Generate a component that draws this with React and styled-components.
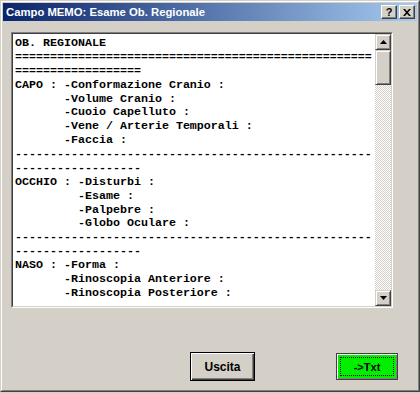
import React from "react";
import styled, { createGlobalStyle } from "styled-components";

const Global = createGlobalStyle`
  html, body { margin: 0; padding: 0; background: #d4d0c8; }
  body { width: 420px; height: 393px; overflow: hidden; }
  * { box-sizing: border-box; }
`;

const Window = styled.div`
  width: 420px;
  height: 392px;
  background: #d4d0c8;
  border: 1px solid;
  border-color: #d4d0c8 #404040 #404040 #d4d0c8;
  display: flex;
  flex-direction: column;
`;

const Frame = styled.div`
  flex: 1;
  display: flex;
  flex-direction: column;
  border: 1px solid;
  border-color: #ffffff #808080 #808080 #ffffff;
  padding: 1px;
`;

const TitleBar = styled.div`
  height: 18px;
  display: flex;
  align-items: center;
  padding: 0 2px 0 2px;
  background: linear-gradient(to right, #0a246a, #a6caf0);
`;

const Title = styled.div`
  flex: 1;
  color: #ffffff;
  font-family: "Liberation Sans", Arial, sans-serif;
  font-weight: bold;
  font-size: 11.3px;
  padding-left: 1px;
  white-space: nowrap;
`;

const CaptionButton = styled.div`
  width: 16px;
  height: 14px;
  margin-left: ${(p) => (p.$gap ? "2px" : "0")};
  background: #d4d0c8;
  border: 1px solid;
  border-color: #ffffff #404040 #404040 #ffffff;
  box-shadow: inset -1px -1px #808080;
  display: flex;
  align-items: center;
  justify-content: center;
  color: #000;
  font-family: "Liberation Sans", Arial, sans-serif;
  font-weight: bold;
  font-size: 11px;
  line-height: 1;
`;

const Client = styled.div`
  flex: 1;
  display: flex;
  flex-direction: column;
  padding: 11px 0 0 8px;
`;

const MemoOuter = styled.div`
  width: 382px;
  height: 276px;
  border: 1px solid;
  border-color: #808080 #ffffff #ffffff #808080;
`;

const MemoInner = styled.div`
  height: 100%;
  display: flex;
  border: 1px solid;
  border-color: #404040 #d4d0c8 #d4d0c8 #404040;
`;

const TextArea = styled.div`
  flex: 1;
  background: #ffffff;
  overflow: hidden;
  padding: 3px 0 0 2px;
  font-family: "Liberation Mono", "Courier New", monospace;
  font-weight: bold;
  font-size: 11.67px;
  line-height: 13.89px;
  color: #000;
`;

const Line = styled.div`
  white-space: pre;
  height: 13.89px;
`;

const ScrollBar = styled.div`
  width: 16px;
  display: flex;
  flex-direction: column;
`;

const ScrollButton = styled.div`
  width: 16px;
  height: ${(p) => p.$h || 16}px;
  flex: none;
  background: #d4d0c8;
  border: 1px solid;
  border-color: #d4d0c8 #404040 #404040 #d4d0c8;
  box-shadow: inset 1px 1px #ffffff, inset -1px -1px #808080;
  display: flex;
  align-items: center;
  justify-content: center;
`;

const Track = styled.div`
  flex: 1;
  background-color: #ffffff;
  background-image: repeating-conic-gradient(#ffffff 0 25%, #d4d0c8 0 50%);
  background-size: 2px 2px;
`;

const Footer = styled.div`
  display: flex;
  justify-content: flex-end;
  align-items: flex-start;
  gap: 81px;
  padding: 44px 19px 0 0;
`;

const DefaultButton = styled.button`
  width: 65px;
  height: 29px;
  padding: 0;
  margin: 0;
  background: #d4d0c8;
  border: 1px solid #000;
  box-shadow: inset 1px 1px #ffffff, inset -1px -1px #404040, inset -2px -2px #808080;
  font-family: "Liberation Sans", Arial, sans-serif;
  font-weight: bold;
  font-size: 12px;
  color: #000;
`;

const GreenButton = styled.button`
  position: relative;
  width: 62px;
  height: 27px;
  margin-top: 1px;
  padding: 0;
  background: #00f000;
  border: 1px solid #404040;
  box-shadow: inset 1px 1px #ffffff, inset -1px -1px #808080;
  font-family: "Liberation Sans", Arial, sans-serif;
  font-weight: bold;
  font-size: 11px;
  color: #000;
`;

const Focus = styled.span`
  position: absolute;
  left: 3px;
  top: 3px;
  right: 3px;
  bottom: 3px;
  border: 1px dotted #000;
  pointer-events: none;
`;

const Arrow = ({ down }) => (
  <svg width="7" height="4" viewBox="0 0 7 4">
    {down ? <path d="M0 0h7L3.5 4z" fill="#000" /> : <path d="M0 4h7L3.5 0z" fill="#000" />}
  </svg>
);

const CloseGlyph = () => (
  <svg width="8" height="7" viewBox="0 0 8 7">
    <path d="M0 0h2l2 2.3L6 0h2L5 3.5 8 7H6L4 4.7 2 7H0l3-3.5z" fill="#000" />
  </svg>
);

const eq = "=".repeat(51);
const dash = "-".repeat(51);
const lines = [
  "OB. REGIONALE",
  eq,
  "=".repeat(18),
  "CAPO : -Conformazione Cranio :",
  "       -Volume Cranio :",
  "       -Cuoio Capelluto :",
  "       -Vene / Arterie Temporali :",
  "       -Faccia :",
  dash,
  "-".repeat(18),
  "OCCHIO : -Disturbi :",
  "         -Esame :",
  "         -Palpebre :",
  "         -Globo Oculare :",
  dash,
  "-".repeat(18),
  "NASO : -Forma :",
  "       -Rinoscopia Anteriore :",
  "       -Rinoscopia Posteriore :",
];

export default function App() {
  return (
    <>
      <Global />
      <Window>
        <Frame>
          <TitleBar>
            <Title>Campo MEMO: Esame Ob. Regionale</Title>
            <CaptionButton>?</CaptionButton>
            <CaptionButton $gap>
              <CloseGlyph />
            </CaptionButton>
          </TitleBar>
          <Client>
            <MemoOuter>
              <MemoInner>
                <TextArea>
                  {lines.map((l, i) => (
                    <Line key={i}>{l}</Line>
                  ))}
                </TextArea>
                <ScrollBar>
                  <ScrollButton>
                    <Arrow />
                  </ScrollButton>
                  <ScrollButton $h={35} />
                  <Track />
                  <ScrollButton>
                    <Arrow down />
                  </ScrollButton>
                </ScrollBar>
              </MemoInner>
            </MemoOuter>
            <Footer>
              <DefaultButton>Uscita</DefaultButton>
              <GreenButton>
                <Focus />
                -&gt;Txt
              </GreenButton>
            </Footer>
          </Client>
        </Frame>
      </Window>
    </>
  );
}
